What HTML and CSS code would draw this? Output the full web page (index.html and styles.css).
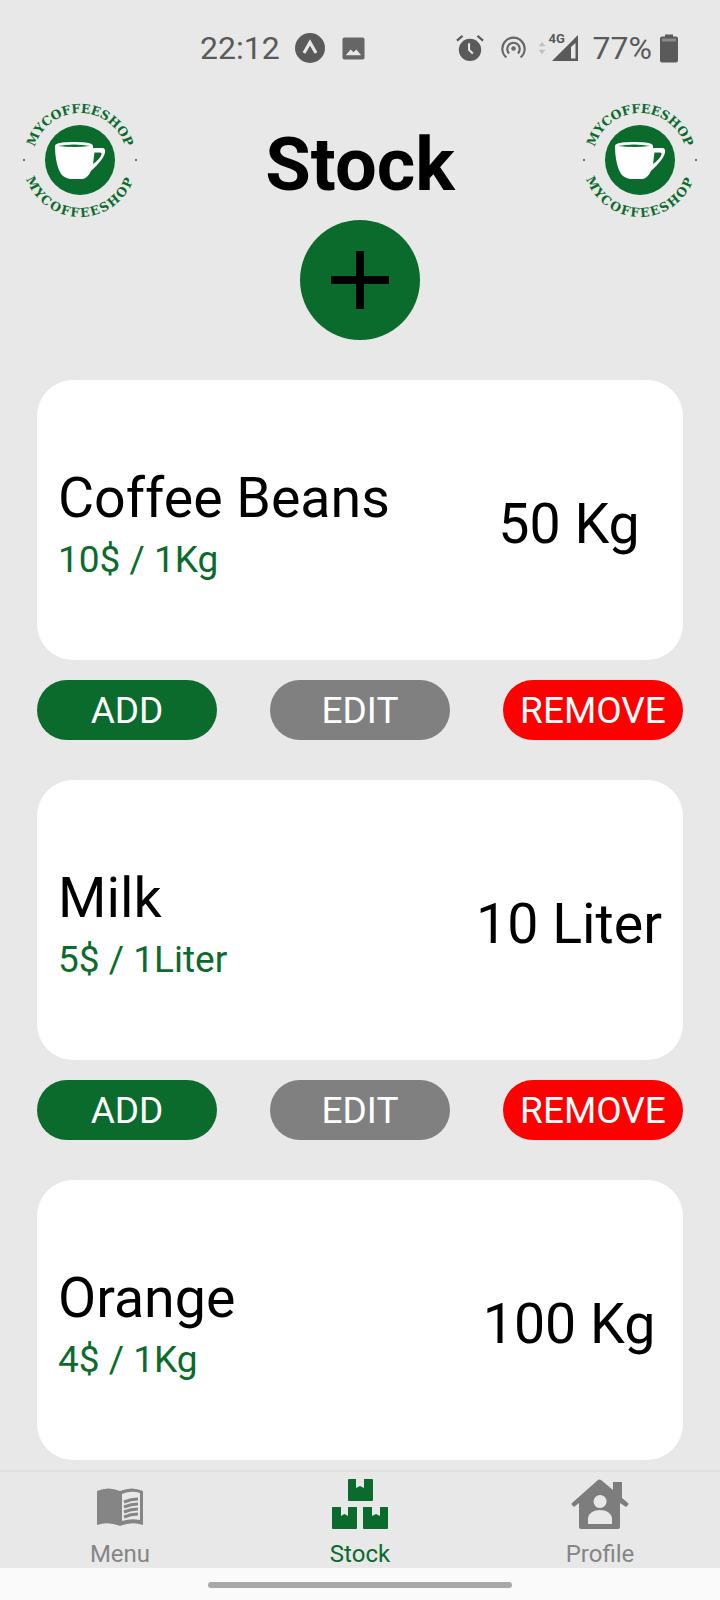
FILE: index.html
```html
<!DOCTYPE html>
<html lang="en">
<head>
<meta charset="utf-8">
<title>Stock</title>
<link rel="stylesheet" href="styles.css">
</head>
<body>
<div class="screen">
  <div class="status">
    <div class="status-left">
      <span class="time">22:12</span>
      <svg class="ic-a" viewBox="0 0 30 30"><circle cx="15" cy="15" r="15" fill="#5a5a5a"/><path d="M9 20 15 9.500 21 20" fill="none" stroke="#e8e8e8" stroke-width="3.200"/></svg>
      <svg class="ic-img" viewBox="0 0 24 24"><rect width="23" height="23" x=".5" y=".5" rx="2" fill="#666"/><path d="M4 19 9 13 12 16 15 13 20 19Z" fill="#e8e8e8"/></svg>
    </div>
    <div class="status-right">
      <svg class="ic-alarm" viewBox="0 0 30 30"><circle cx="15" cy="17" r="12" fill="#5a5a5a"/><path d="M1 7 7 2M29 7 23 2" stroke="#5a5a5a" stroke-width="2.400" fill="none"/><path d="M14 10V17L18 21" stroke="#e8e8e8" stroke-width="2.200" fill="none"/></svg>
      <svg class="ic-hot" viewBox="0 0 28 28"><g fill="none" stroke="#666" stroke-width="2.400"><path d="M6 24A12.500 12.500 0 1 1 22 24"/><path d="M9 19.500A7 7 0 1 1 19 19.500"/></g><circle cx="14" cy="14" r="2.500" fill="#666"/></svg>
      <svg class="ic-arrows" viewBox="0 0 10 16"><path d="M5 1 9 6H1ZM5 15 1 10H9Z" fill="#c0c0c0"/></svg>
      <span class="net">
        <span class="net-label">4G</span>
        <svg class="ic-signal" viewBox="0 0 28 28"><path d="M27 1V27H1Z M24.500 9 24.500 24.500H20V13Z" fill="#5a5a5a" fill-rule="evenodd"/></svg>
      </span>
      <span class="pct">77%</span>
      <svg class="ic-batt" viewBox="0 0 18 28"><path d="M5 0H13V2H16A2 2 0 0 1 18 4V26A2 2 0 0 1 16 28H2A2 2 0 0 1 0 26V4A2 2 0 0 1 2 2H5Z" fill="#5a5a5a"/><rect x="2" y="4" width="14" height="3" fill="#8a8a8a"/></svg>
    </div>
  </div>

  <header class="head">
    <svg class="logo" viewBox="0 0 120 120">
      <defs>
        <path id="arcTop" d="M13 60A47 47 0 0 1 107 60"/>
        <path id="arcBot" d="M3 60A57 57 0 0 0 117 60"/>
      </defs>
      <text class="logo-text"><textPath href="#arcTop" startOffset="50%" text-anchor="middle">MYCOFFEESHOP</textPath></text>
      <text class="logo-text logo-wide"><textPath href="#arcBot" startOffset="50%" text-anchor="middle">MYCOFFEESHOP</textPath></text>
      <circle cx="4" cy="60" r="1" fill="#0a6b2d"/><circle cx="116" cy="60" r="1" fill="#0a6b2d"/>
      <circle cx="60" cy="60" r="35" fill="#0a6b2d"/>
      <path d="M35 46Q35 42 54 42 73 42 73 46V48H82Q86 48 85 53 83 60 71 71 67 79 62 79H50Q42 78 39 70 35 60 35 46ZM74.500 52.500 73 64Q80 59 81.500 54.500 82 52.500 80 52.500Z" fill="#fff" fill-rule="evenodd"/>
      <path d="M38 46Q54 43 70 46 54 48 38 46Z" fill="#0a6b2d"/>
    </svg>
    <h1 class="title">Stock</h1>
    <svg class="logo" viewBox="0 0 120 120">
      <text class="logo-text"><textPath href="#arcTop" startOffset="50%" text-anchor="middle">MYCOFFEESHOP</textPath></text>
      <text class="logo-text logo-wide"><textPath href="#arcBot" startOffset="50%" text-anchor="middle">MYCOFFEESHOP</textPath></text>
      <circle cx="4" cy="60" r="1" fill="#0a6b2d"/><circle cx="116" cy="60" r="1" fill="#0a6b2d"/>
      <circle cx="60" cy="60" r="35" fill="#0a6b2d"/>
      <path d="M35 46Q35 42 54 42 73 42 73 46V48H82Q86 48 85 53 83 60 71 71 67 79 62 79H50Q42 78 39 70 35 60 35 46ZM74.500 52.500 73 64Q80 59 81.500 54.500 82 52.500 80 52.500Z" fill="#fff" fill-rule="evenodd"/>
      <path d="M38 46Q54 43 70 46 54 48 38 46Z" fill="#0a6b2d"/>
    </svg>
  </header>

  <div class="add-wrap">
    <button class="fab" aria-label="Add">
      <svg viewBox="0 0 58 58" class="fab-ic"><path d="M25 0H33V25H58V33H33V58H25V33H0V25H25Z" fill="#000"/></svg>
    </button>
  </div>

  <main class="list">
    <section class="item">
      <div class="card">
        <div class="info"><div class="name">Coffee Beans</div><div class="price">10$ / 1Kg</div></div>
        <div class="qty">50 Kg</div>
      </div>
      <div class="actions">
        <button class="btn btn-add">ADD</button><button class="btn btn-edit">EDIT</button><button class="btn btn-remove">REMOVE</button>
      </div>
    </section>
    <section class="item">
      <div class="card">
        <div class="info"><div class="name">Milk</div><div class="price">5$ / 1Liter</div></div>
        <div class="qty">10 Liter</div>
      </div>
      <div class="actions">
        <button class="btn btn-add">ADD</button><button class="btn btn-edit">EDIT</button><button class="btn btn-remove">REMOVE</button>
      </div>
    </section>
    <section class="item">
      <div class="card">
        <div class="info"><div class="name">Orange</div><div class="price">4$ / 1Kg</div></div>
        <div class="qty">100 Kg</div>
      </div>
    </section>
  </main>

  <nav class="tabs">
    <div class="tab">
      <svg class="tab-ic" viewBox="0 0 60 52"><path d="M7 12Q18 7 30 12 42 7 53 12V46Q42 42 30 47 18 42 7 46Z" fill="#858585"/><path d="M32 15Q41 11 50 14V41Q41 39 32 42Z" fill="#e8e8e8"/><path d="M34 23Q41 20 48 20M34 28Q41 25 48 25M34 33Q41 30 48 30M34 38Q41 35 48 35" fill="none" stroke="#858585" stroke-width="3"/></svg>
      <span class="tab-label">Menu</span>
    </div>
    <div class="tab tab-active">
      <svg class="tab-ic" viewBox="0 0 60 52"><path d="M18 1Q18 0 19 0H26V9L30 7 34 9V0H42Q43 0 43 1V21Q43 22 42 22H19Q18 22 18 21ZM2 28H11V37L14.500 35 18 37V28H27V49Q27 50 26 50H3Q2 50 2 49ZM33 28H42V37L46 35 50 37V28H58V49Q58 50 57 50H34Q33 50 33 49Z" fill="#0a6b2d"/></svg>
      <span class="tab-label">Stock</span>
    </div>
    <div class="tab">
      <svg class="tab-ic" viewBox="0 0 60 52"><path fill-rule="evenodd" d="M28 1Q29 0 31 1L43 11V3H52V19L58 24Q59 25 58 26L56 28 50 24V48Q50 50 48 50H11Q9 50 9 48V24L4 28 2 26Q1 25 2 24ZM30 16A6.500 6.500 0 1 0 30.100 29 6.500 6.500 0 1 0 30 16ZM18 45H42V39Q40 31 30 31 20 31 18 39Z" fill="#7d7d7d"/></svg>
      <span class="tab-label">Profile</span>
    </div>
  </nav>
  <div class="gesture"><span class="pill"></span></div>
</div>
</body>
</html>
```
FILE: styles.css
```css
* { box-sizing: border-box; }
html, body { margin: 0; padding: 0; }
body { width: 720px; height: 1600px; overflow: hidden; font-family: Roboto, "Liberation Sans", sans-serif; }
.screen { width: 720px; height: 1600px; background: #e8e8e8; display: flex; flex-direction: column; overflow: hidden; }

.status { height: 96px; padding: 0 42px 0 200px; display: flex; justify-content: space-between; align-items: center; color: #5a5a5a; flex: none; }
.status-left, .status-right { display: flex; align-items: center; }
.time { font-size: 32px; }
.ic-a { width: 30px; height: 30px; margin-left: 15px; }
.ic-img { width: 23px; height: 23px; margin-left: 17px; }
.ic-alarm { width: 28px; height: 28px; }
.ic-hot { width: 25px; height: 25px; margin-left: 17px; }
.ic-arrows { width: 10px; height: 14px; margin-left: 11px; }
.net { position: relative; width: 30px; height: 28px; margin-left: 2px; display: block; }
.net-label { position: absolute; left: 0; top: -3px; font-size: 13px; font-weight: 700; color: #5a5a5a; }
.ic-signal { width: 28px; height: 28px; display: block; margin-left: 2px; }
.pct { font-size: 32px; margin-left: 14px; }
.ic-batt { width: 18px; height: 29px; margin-left: 8px; }

.head { display: flex; justify-content: space-between; align-items: flex-start; padding: 4px 20px 0; height: 124px; flex: none; }
.logo { width: 120px; height: 120px; flex: none; }
.logo-text { font: 900 12.500px "DejaVu Serif", serif; fill: #0a6b2d; }
.logo-wide { letter-spacing: 1.600px; }
.title { margin: 28px 0 0; font-size: 74px; line-height: 74px; font-weight: 700; color: #000; }

.add-wrap { display: flex; justify-content: center; flex: none; height: 160px; }
.fab { width: 120px; height: 120px; border-radius: 50%; background: #0a6b2d; border: 0; padding: 0; display: flex; align-items: center; justify-content: center; }
.fab-ic { width: 58px; height: 58px; }

.list { flex: 1; min-height: 0; padding: 0 37px; overflow: hidden; }
.item { margin-bottom: 40px; }
.card { height: 280px; background: #fff; border-radius: 36px; display: flex; align-items: center; padding: 0 14px 0 21px; }
.info { flex: 1; margin-top: -1px; }
.name { font-size: 55.500px; line-height: 80px; color: #000; }
.price { font-size: 37px; line-height: 42px; color: #0a6b2d; }
.qty { width: 200px; font-size: 55.500px; padding-top: 8px; color: #000; white-space: nowrap; display: flex; justify-content: center; }
.actions { display: flex; justify-content: space-between; margin-top: 20px; }
.btn { width: 180px; height: 60px; border: 0; border-radius: 30px; color: #fff; font: 400 37px Roboto, sans-serif; padding: 0; }
.btn-add { background: #0a6b2d; }
.btn-edit { background: #808080; }
.btn-remove { background: #ff0000; }

.tabs { height: 98px; flex: none; display: flex; background: #e8e8e8; border-top: 2px solid #dfdfdf; margin-top: 10px; }
.tab { flex: 1; display: flex; flex-direction: column; align-items: center; color: #858585; }
.tab-ic { width: 60px; height: 52px; margin-top: 7px; }
.tab-label { font-size: 24px; line-height: 28px; margin-top: 9px; }
.tab-active { color: #0a6b2d; }

.gesture { height: 32px; flex: none; background: #fafafa; display: flex; justify-content: center; padding-top: 14px; }
.pill { width: 304px; height: 6px; border-radius: 3px; background: #a8a8a8; display: block; }
```
